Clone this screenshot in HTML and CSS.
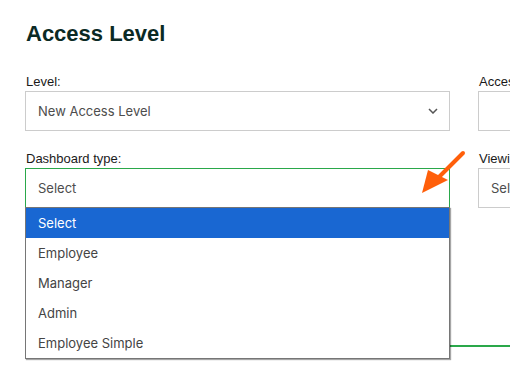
FILE: index.html
```html
<!DOCTYPE html>
<html lang="en">
<head>
    <meta charset="UTF-8">
    <title>Access Level</title>
    <link rel="stylesheet" href="styles.css">
</head>
<body>
    <div class="page">
        <h1>Access Level</h1>

        <div class="form-grid">
            <div class="field">
                <label>Level:</label>
                <div class="select-box">
                    <span>New Access Level</span>
                    <svg class="chevron" width="10" height="6" viewBox="0 0 10 6">
                        <path d="M1 1 L5 5 L9 1" fill="none" stroke="#555" stroke-width="1.5"/>
                    </svg>
                </div>
            </div>
            <div class="field">
                <label>Access</label>
                <div class="select-box"></div>
            </div>

            <div class="field">
                <label>Dashboard type:</label>
                <div class="select-box focused">
                    <span>Select</span>
                </div>
                <ul class="dropdown">
                    <li class="active">Select</li>
                    <li>Employee</li>
                    <li>Manager</li>
                    <li>Admin</li>
                    <li>Employee Simple</li>
                </ul>
            </div>
            <div class="field">
                <label>Viewing</label>
                <div class="select-box"><span>Self</span></div>
            </div>
        </div>

        <div class="tab-line"></div>
    </div>

    <!-- annotation arrow -->
    <svg class="arrow" width="60" height="60" viewBox="0 0 60 60">
        <line x1="48" y1="3" x2="24" y2="27" stroke="#ff5f0a" stroke-width="4" stroke-linecap="round"/>
        <polygon points="7,43 13,20 33,30" fill="#ff5f0a"/>
    </svg>
</body>
</html>
```

FILE: styles.css
```css
* {
    margin: 0;
    padding: 0;
    box-sizing: border-box;
}

body {
    font-family: "Liberation Sans", Arial, sans-serif;
    background: #fff;
    color: #222;
    width: 510px;
    height: 372px;
    overflow: hidden;
    position: relative;
}

.page {
    padding: 20px 0 0 25px;
}

h1 {
    font-size: 22px;
    font-weight: bold;
    color: #0b2a24;
    line-height: 28px;
    margin-left: 1px;
}

.form-grid {
    display: grid;
    grid-template-columns: 425px 425px;
    column-gap: 28px;
    row-gap: 20px;
    margin-top: 26px;
}

.field {
    position: relative;
}

.field label {
    display: block;
    font-size: 13px;
    line-height: 16px;
    margin: 0 0 1px 1px;
    color: #1a1a1a;
}

.select-box {
    height: 40px;
    border: 1px solid #ccc;
    display: flex;
    align-items: center;
    justify-content: space-between;
    padding: 0 10px 0 12px;
    font-family: Inter, "Open Sans", sans-serif;
    font-size: 13px;
    color: #4d4d4d;
}

.select-box.focused {
    border-color: #2aa84a;
}

.chevron {
    margin-right: 1px;
}

.dropdown {
    position: absolute;
    top: 56px;
    left: 0;
    width: 425px;
    list-style: none;
    background: #fff;
    border: 1px solid #767676;
    box-shadow: 1px 1px 1px rgba(0, 0, 0, 0.35);
    font-family: Inter, "Open Sans", sans-serif;
    font-size: 13px;
    color: #444;
    z-index: 2;
}

.dropdown li {
    height: 30px;
    line-height: 30px;
    padding-left: 12px;
}

.dropdown li.active {
    background: #1967d2;
    color: #fff;
}

.tab-line {
    margin-top: 137px;
    height: 2px;
    background: #2aa84a;
}

.arrow {
    position: absolute;
    left: 415px;
    top: 150px;
    z-index: 3;
}
```
